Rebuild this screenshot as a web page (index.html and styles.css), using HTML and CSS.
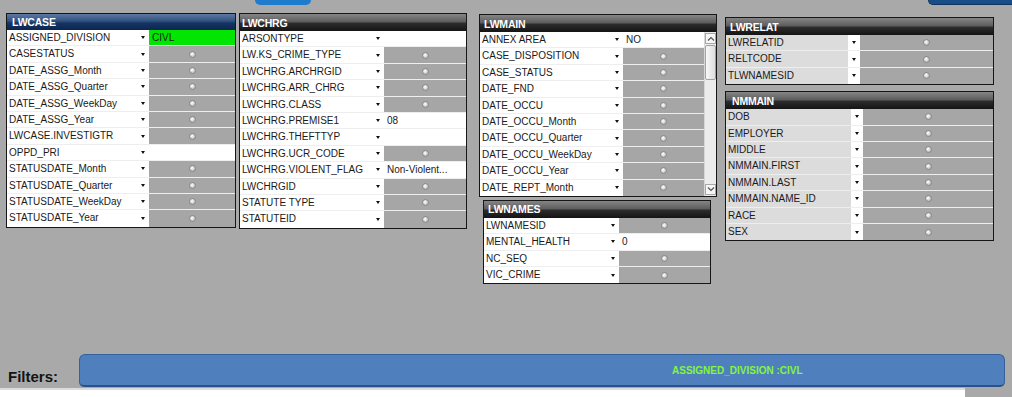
FILE: index.html
```html
<!DOCTYPE html>
<html>
<head>
<meta charset="utf-8">
<link rel="stylesheet" href="styles.css">
</head>
<body>
<div class="page">
  <div class="topbar">
    <div class="btn-blue"></div>
    <div class="btn-navy"></div>
  </div>
  <div class="panels">
    <div class="col c1">
      <div class="panel p-case">
        <div class="hdr blue">LWCASE</div>
        <div class="row"><div class="t">ASSIGNED_DIVISION</div><div class="dd"><i></i></div><div class="v green">CIVL</div></div>
        <div class="row"><div class="t">CASESTATUS</div><div class="dd"><i></i></div><div class="v gray"><b class="radio"></b></div></div>
        <div class="row"><div class="t">DATE_ASSG_Month</div><div class="dd"><i></i></div><div class="v gray"><b class="radio"></b></div></div>
        <div class="row"><div class="t">DATE_ASSG_Quarter</div><div class="dd"><i></i></div><div class="v gray"><b class="radio"></b></div></div>
        <div class="row"><div class="t">DATE_ASSG_WeekDay</div><div class="dd"><i></i></div><div class="v gray"><b class="radio"></b></div></div>
        <div class="row"><div class="t">DATE_ASSG_Year</div><div class="dd"><i></i></div><div class="v gray"><b class="radio"></b></div></div>
        <div class="row"><div class="t">LWCASE.INVESTIGTR</div><div class="dd"><i></i></div><div class="v gray"><b class="radio"></b></div></div>
        <div class="row"><div class="t">OPPD_PRI</div><div class="dd"><i></i></div><div class="v"></div></div>
        <div class="row"><div class="t">STATUSDATE_Month</div><div class="dd"><i></i></div><div class="v gray"><b class="radio"></b></div></div>
        <div class="row"><div class="t">STATUSDATE_Quarter</div><div class="dd"><i></i></div><div class="v gray"><b class="radio"></b></div></div>
        <div class="row"><div class="t">STATUSDATE_WeekDay</div><div class="dd"><i></i></div><div class="v gray"><b class="radio"></b></div></div>
        <div class="row"><div class="t">STATUSDATE_Year</div><div class="dd"><i></i></div><div class="v gray"><b class="radio"></b></div></div>
      </div>
    </div>
    <div class="col c2">
      <div class="panel p-chrg">
        <div class="hdr">LWCHRG</div>
        <div class="row"><div class="t">ARSONTYPE</div><div class="dd"><i></i></div><div class="v"></div></div>
        <div class="row"><div class="t">LW.KS_CRIME_TYPE</div><div class="dd"><i></i></div><div class="v gray"><b class="radio"></b></div></div>
        <div class="row"><div class="t">LWCHRG.ARCHRGID</div><div class="dd"><i></i></div><div class="v gray"><b class="radio"></b></div></div>
        <div class="row"><div class="t">LWCHRG.ARR_CHRG</div><div class="dd"><i></i></div><div class="v gray"><b class="radio"></b></div></div>
        <div class="row"><div class="t">LWCHRG.CLASS</div><div class="dd"><i></i></div><div class="v gray"><b class="radio"></b></div></div>
        <div class="row"><div class="t">LWCHRG.PREMISE1</div><div class="dd"><i></i></div><div class="v">08</div></div>
        <div class="row"><div class="t">LWCHRG.THEFTTYP</div><div class="dd"><i></i></div><div class="v"></div></div>
        <div class="row"><div class="t">LWCHRG.UCR_CODE</div><div class="dd"><i></i></div><div class="v gray"><b class="radio"></b></div></div>
        <div class="row"><div class="t">LWCHRG.VIOLENT_FLAG</div><div class="dd"><i></i></div><div class="v">Non-Violent...</div></div>
        <div class="row"><div class="t">LWCHRGID</div><div class="dd"><i></i></div><div class="v gray"><b class="radio"></b></div></div>
        <div class="row"><div class="t">STATUTE TYPE</div><div class="dd"><i></i></div><div class="v gray"><b class="radio"></b></div></div>
        <div class="row"><div class="t">STATUTEID</div><div class="dd"><i></i></div><div class="v gray"><b class="radio"></b></div></div>
      </div>
    </div>
    <div class="col c3">
      <div class="panel p-main">
        <div class="hdr">LWMAIN</div>
        <div class="body">
          <div class="rows">
            <div class="row"><div class="t">ANNEX AREA</div><div class="dd"><i></i></div><div class="v">NO</div></div>
            <div class="row"><div class="t">CASE_DISPOSITION</div><div class="dd"><i></i></div><div class="v gray"><b class="radio"></b></div></div>
            <div class="row"><div class="t">CASE_STATUS</div><div class="dd"><i></i></div><div class="v gray"><b class="radio"></b></div></div>
            <div class="row"><div class="t">DATE_FND</div><div class="dd"><i></i></div><div class="v gray"><b class="radio"></b></div></div>
            <div class="row"><div class="t">DATE_OCCU</div><div class="dd"><i></i></div><div class="v gray"><b class="radio"></b></div></div>
            <div class="row"><div class="t">DATE_OCCU_Month</div><div class="dd"><i></i></div><div class="v gray"><b class="radio"></b></div></div>
            <div class="row"><div class="t">DATE_OCCU_Quarter</div><div class="dd"><i></i></div><div class="v gray"><b class="radio"></b></div></div>
            <div class="row"><div class="t">DATE_OCCU_WeekDay</div><div class="dd"><i></i></div><div class="v gray"><b class="radio"></b></div></div>
            <div class="row"><div class="t">DATE_OCCU_Year</div><div class="dd"><i></i></div><div class="v gray"><b class="radio"></b></div></div>
            <div class="row"><div class="t">DATE_REPT_Month</div><div class="dd"><i></i></div><div class="v gray"><b class="radio"></b></div></div>
          </div>
          <div class="sb">
            <div class="sb-btn"><svg width="8" height="6" viewBox="0 0 8 6"><path d="M1 4.5 L4 1.5 L7 4.5" fill="none" stroke="#555" stroke-width="1.2"/></svg></div>
            <div class="sb-thumb"></div>
            <div class="sb-btn down"><svg width="8" height="6" viewBox="0 0 8 6"><path d="M1 1.5 L4 4.5 L7 1.5" fill="none" stroke="#555" stroke-width="1.2"/></svg></div>
          </div>
        </div>
      </div>
      <div class="panel p-names">
        <div class="hdr">LWNAMES</div>
        <div class="row"><div class="t">LWNAMESID</div><div class="dd"><i></i></div><div class="v gray"><b class="radio"></b></div></div>
        <div class="row"><div class="t">MENTAL_HEALTH</div><div class="dd"><i></i></div><div class="v">0</div></div>
        <div class="row"><div class="t">NC_SEQ</div><div class="dd"><i></i></div><div class="v gray"><b class="radio"></b></div></div>
        <div class="row"><div class="t">VIC_CRIME</div><div class="dd"><i></i></div><div class="v gray"><b class="radio"></b></div></div>
      </div>
    </div>
    <div class="col c4">
      <div class="panel p-relat shaded">
        <div class="hdr">LWRELAT</div>
        <div class="row"><div class="t">LWRELATID</div><div class="dd"><i></i></div><div class="v gray"><b class="radio"></b></div></div>
        <div class="row"><div class="t">RELTCODE</div><div class="dd"><i></i></div><div class="v gray"><b class="radio"></b></div></div>
        <div class="row"><div class="t">TLWNAMESID</div><div class="dd"><i></i></div><div class="v gray"><b class="radio"></b></div></div>
      </div>
      <div class="panel p-nm shaded">
        <div class="hdr">NMMAIN</div>
        <div class="row"><div class="t">DOB</div><div class="dd"><i></i></div><div class="v gray"><b class="radio"></b></div></div>
        <div class="row"><div class="t">EMPLOYER</div><div class="dd"><i></i></div><div class="v gray"><b class="radio"></b></div></div>
        <div class="row"><div class="t">MIDDLE</div><div class="dd"><i></i></div><div class="v gray"><b class="radio"></b></div></div>
        <div class="row"><div class="t">NMMAIN.FIRST</div><div class="dd"><i></i></div><div class="v gray"><b class="radio"></b></div></div>
        <div class="row"><div class="t">NMMAIN.LAST</div><div class="dd"><i></i></div><div class="v gray"><b class="radio"></b></div></div>
        <div class="row"><div class="t">NMMAIN.NAME_ID</div><div class="dd"><i></i></div><div class="v gray"><b class="radio"></b></div></div>
        <div class="row"><div class="t">RACE</div><div class="dd"><i></i></div><div class="v gray"><b class="radio"></b></div></div>
        <div class="row"><div class="t">SEX</div><div class="dd"><i></i></div><div class="v gray"><b class="radio"></b></div></div>
      </div>
    </div>
  </div>
  <div class="filters">
    <div class="flabel">Filters:</div>
    <div class="fbar"><span class="ftext">ASSIGNED_DIVISION :CIVL</span></div>
  </div>
  <div class="bottom"></div>
</div>
</body>
</html>
```
FILE: styles.css
```css
html, body {
  margin: 0;
  padding: 0;
}
body {
  background: #a9a9a9;
  font-family: "Liberation Sans", Arial, sans-serif;
  color: #1a1a1a;
}
.page {
  width: 1012px;
  height: 397px;
  display: flex;
  flex-direction: column;
  overflow: hidden;
}
.topbar {
  height: 5px;
  display: flex;
}
.btn-blue {
  margin-left: 255px;
  width: 56px;
  height: 5px;
  background: #1f7bcc;
  border-radius: 0 0 6px 6px;
}
.btn-navy {
  margin-left: auto;
  width: 83px;
  height: 4px;
  background: #184d88;
  border: 1px solid #0e335f;
  border-top: 0;
  border-right: 0;
  border-radius: 0 0 0 6px;
}
.panels {
  display: flex;
  align-items: flex-start;
  padding-left: 6px;
}
.col {
  display: flex;
  flex-direction: column;
  align-items: flex-start;
}
.c1 { margin-top: 8px; }
.c2 { margin-top: 8px; margin-left: 3px; }
.c3 { margin-top: 9px; margin-left: 12px; }
.c4 { margin-top: 12px; margin-left: 8px; }

.panel {
  border: 1px solid #161616;
  background: #fff;
  box-sizing: border-box;
}
.p-case { width: 230px; --t: 130px; }
.p-chrg { width: 228px; --t: 132px; }
.p-main { width: 238px; --t: 131px; }
.p-names { width: 228px; --t: 123px; margin-left: 4px; margin-top: 3px; }
.p-relat { width: 269px; --t: 122px; }
.p-nm { width: 269px; --t: 125px; margin-top: 6px; }

.hdr {
  height: 17px;
  box-sizing: border-box;
  padding-left: 4px;
  display: flex;
  align-items: center;
  color: #fff;
  font-weight: bold;
  font-size: 10.5px;
  letter-spacing: -0.2px;
  background: linear-gradient(#858585 0%, #5e5e5e 45%, #2c2c2c 55%, #141414 100%);
}
.hdr.blue {
  height: 16px;
  padding-left: 5px;
  background: linear-gradient(#5d7aa3 0%, #2f4f7e 45%, #163664 55%, #0b2550 100%);
}
.p-chrg .hdr { padding-left: 2px; }
.p-nm .hdr { padding-left: 6px; }

.row {
  display: grid;
  grid-template-columns: var(--t) 12px 1fr;
  height: 16.4px;
  box-sizing: border-box;
  border-bottom: 1px solid #eeeeee;
  font-size: 10px;
  line-height: 15px;
}
.row:last-child { border-bottom: 0; }
.t {
  padding-left: 2px;
  white-space: nowrap;
  overflow: hidden;
  background: #fff;
}
.shaded .t { background: #dcdcdc; }
.dd {
  background: #fff;
  display: flex;
  align-items: center;
  justify-content: center;
}
.dd i {
  display: block;
  width: 0;
  height: 0;
  border-left: 2.5px solid transparent;
  border-right: 2.5px solid transparent;
  border-top: 3px solid #111;
  margin-right: 1px;
}
.v {
  background: #fff;
  padding-left: 3px;
  white-space: nowrap;
  overflow: hidden;
}
.v.gray {
  background: #a6a6a6;
  display: flex;
  align-items: center;
  justify-content: center;
  padding-left: 0;
}
.v.green {
  background: #00e600;
}
.radio {
  display: block;
  width: 5px;
  height: 5px;
  border-radius: 50%;
  border: 1px solid #8a8a8a;
  background: radial-gradient(circle at 40% 40%, #ffffff 0, #ececec 1px, #bdbdbd 3px);
}

.body {
  display: flex;
}
.rows {
  flex: 1;
}
.sb {
  width: 12px;
  background: #ececec;
  display: flex;
  flex-direction: column;
  align-items: center;
  box-sizing: border-box;
  border-left: 1px solid #d8d8d8;
}
.sb-btn {
  width: 9px;
  height: 9px;
  margin-top: 1px;
  border: 1px solid #a8a8a8;
  background: #f6f6f6;
  display: flex;
  align-items: center;
  justify-content: center;
  box-sizing: content-box;
}
.sb-btn.down {
  margin-top: auto;
  margin-bottom: 1px;
}
.sb-thumb {
  width: 9px;
  height: 33px;
  margin-top: 1px;
  border: 1px solid #a2a2a2;
  border-radius: 2px;
  background: linear-gradient(90deg, #f8f8f8, #dedede);
}

.filters {
  margin-top: auto;
  height: 33px;
  display: flex;
  align-items: flex-end;
}
.flabel {
  width: 79px;
  padding-left: 8px;
  padding-bottom: 2px;
  font-size: 15px;
  font-weight: bold;
  color: #141414;
  box-sizing: border-box;
  flex: none;
}
.fbar {
  width: 926px;
  height: 33px;
  box-sizing: border-box;
  background: #4f80bd;
  border: 1px solid #34619b;
  border-bottom: 2px solid #2b5189;
  border-radius: 6px 6px 5px 5px;
  display: flex;
  align-items: center;
  padding-left: 592px;
  flex: none;
}
.ftext {
  color: #84f63c;
  font-weight: bold;
  font-size: 10px;
}
.bottom {
  height: 10px;
  width: 965px;
  background: linear-gradient(#a9a9a9 0, #a9a9a9 1px, #dcdcdc 1px, #dcdcdc 3px, #ffffff 3px);
}
```
